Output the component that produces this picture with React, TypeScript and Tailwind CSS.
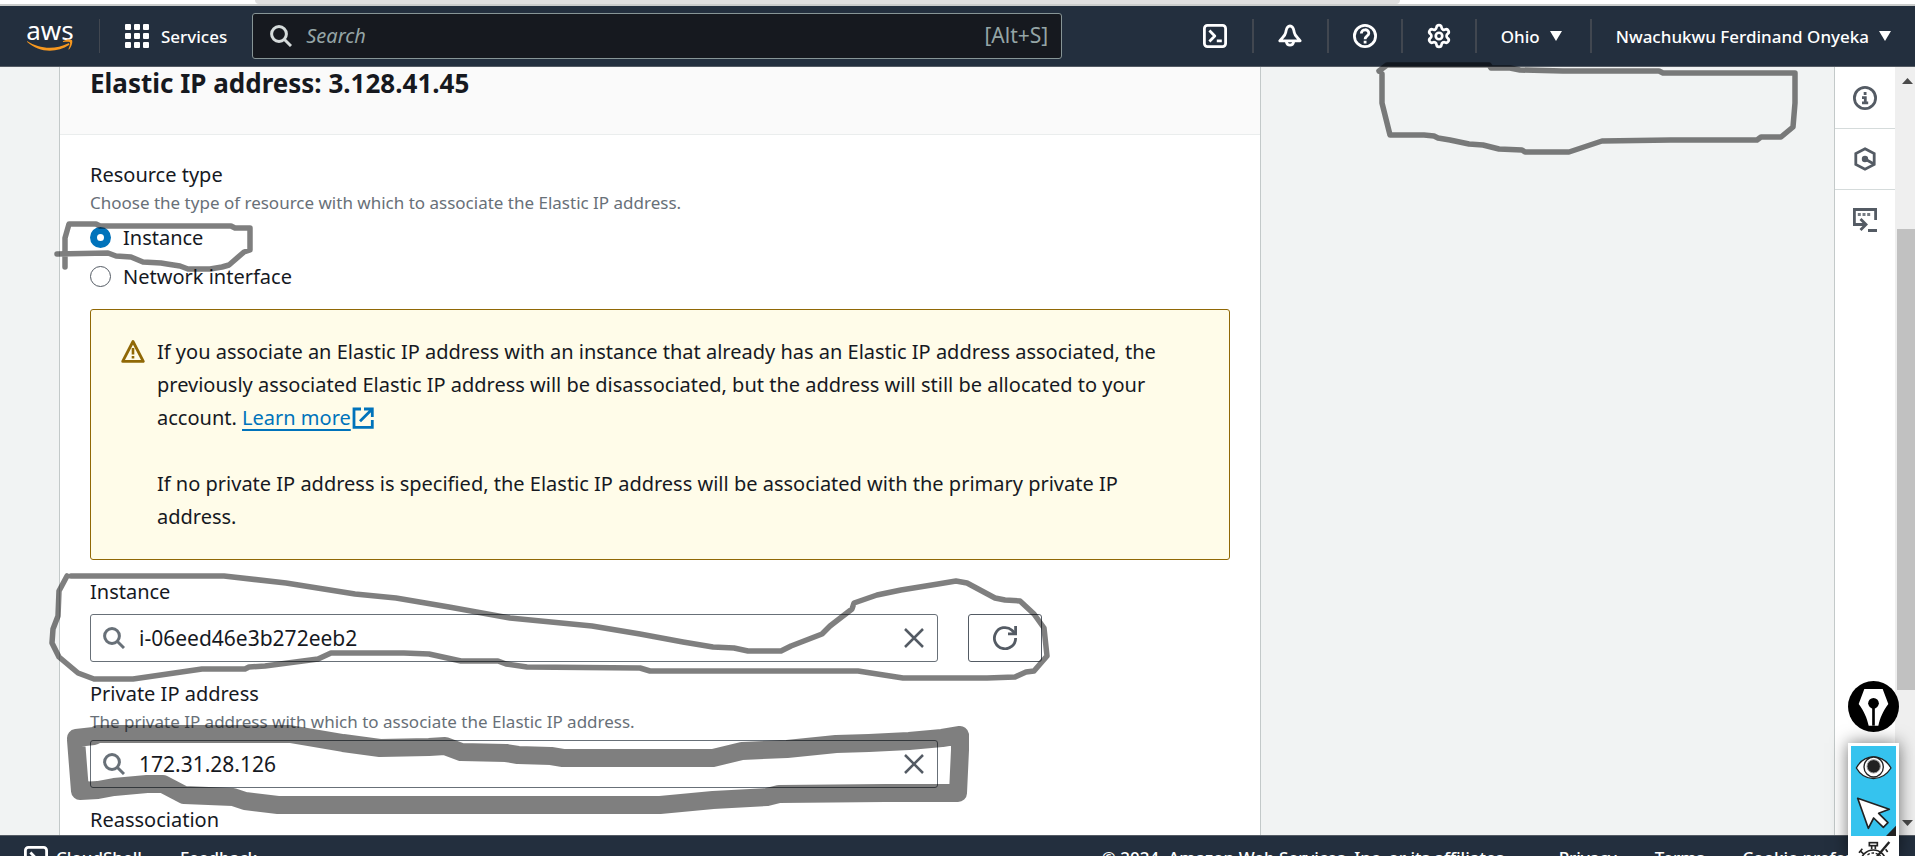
import React from "react";
import { Settings } from "lucide-react";

type IconProps = { className?: string };

const line = {
  fill: "none",
  stroke: "currentColor",
  strokeWidth: 2.8,
  strokeLinejoin: "round" as const,
};

function SearchIcon({ className }: IconProps) {
  return (
    <svg viewBox="0 0 22 22" className={className} {...line} strokeWidth={3} aria-hidden="true">
      <circle cx="9" cy="9" r="7.4" />
      <path d="M14.2 14.2 21 21" />
    </svg>
  );
}

function ShellIcon({ className }: IconProps) {
  return (
    <svg viewBox="0 0 24 24" className={className} {...line} aria-hidden="true">
      <rect x="1.4" y="1.4" width="21.2" height="21.2" rx="3" />
      <path d="m6.4 6.6 5.4 5.4-5.4 5.4M13.8 16.8h5" />
    </svg>
  );
}

function BellIcon() {
  return (
    <svg viewBox="0 0 24 24" className="size-6" {...line} aria-hidden="true">
      <path d="M12 2C8.600 2 8.400 5 7.800 8.200 7.200 12 4.500 13.500 1.800 16.800H22.200C19.500 13.500 16.800 12 16.200 8.200 15.600 5 15.400 2 12 2Z" />
      <path d="M8.300 17.500a3.800 4.800 0 0 0 7.400 0" />
    </svg>
  );
}

function HelpIcon() {
  return (
    <svg viewBox="0 0 24 24" className="size-6" {...line} aria-hidden="true">
      <circle cx="12" cy="12" r="10.600" />
      <path d="M8.300 9.400C8.300 4.600 15.800 4.600 15.800 9.200 15.800 12 12.100 11.800 12.100 15.300M12.100 16.800v2.600" />
    </svg>
  );
}

function InfoIcon() {
  return (
    <svg viewBox="0 0 24 24" className="size-6" {...line} aria-hidden="true">
      <circle cx="12" cy="12" r="10.600" />
      <path d="M12.100 6v3M9 11.600h3.300v5.200M9 16.800h6.200" strokeLinejoin="miter" />
    </svg>
  );
}

function HexIcon() {
  return (
    <svg viewBox="0 0 24 24" className="size-6" {...line} aria-hidden="true">
      <path d="M12 1.800 21.200 6.600V17.400L12 22.200 2.800 17.400V6.600Z" strokeLinejoin="miter" />
      <circle cx="12" cy="12" r="1.800" fill="currentColor" />
      <path d="m12 12 8.500 4.800" />
    </svg>
  );
}

function ConnectIcon() {
  return (
    <svg viewBox="0 0 24 24" className="size-6" {...line} strokeLinejoin="miter" aria-hidden="true">
      <path d="M22.600 12V1.500H1.400V16.500H13M7.500 11 13 16.500l-5.500 5.500M15 22.500h9" />
      <path d="M4.800 6.500h3M9.500 6.500h3M14.200 6.500h3" strokeOpacity=".8" />
    </svg>
  );
}

function WarningIcon() {
  return (
    <svg viewBox="0 0 24 24" className="mt-1 size-6 shrink-0 text-[#906806]" {...line} aria-hidden="true">
      <path d="M12 2.500 22.300 22.400H1.700Z" />
      <path d="M12 9v6.500M12 17v2.600" strokeWidth="2.600" />
    </svg>
  );
}

function ExternalIcon() {
  return (
    <svg viewBox="0 0 22 22" className="ml-px inline size-[22px] align-[-4px]" {...line} strokeLinejoin="miter" aria-hidden="true">
      <path d="M9 2H2V20.300H20.300V13M12 2H20.300V10M20 2.300 8 14.300" />
    </svg>
  );
}

function CloseIcon() {
  return (
    <svg viewBox="0 0 20 20" className="size-5" {...line} strokeWidth={2.500} aria-hidden="true">
      <path d="m1 1 18 18M19 1 1 19" />
    </svg>
  );
}

function RefreshIcon() {
  return (
    <svg viewBox="0 0 24 24" className="size-6" {...line} strokeLinejoin="miter" aria-hidden="true">
      <path d="M22.600 12A10.600 10.600 0 1 1 19 4.200L22 7.500" />
      <path d="M22.600 0V7.800H15" />
    </svg>
  );
}

function Caret() {
  return (
    <svg viewBox="0 0 12 10" className="h-2.5 w-3" aria-hidden="true">
      <path d="M0 0h12L6 10Z" fill="currentColor" />
    </svg>
  );
}

function NavBar() {
  const cell = "flex h-[34px] items-center justify-center border-l-2 border-[#414750]";
  return (
    <header className="flex h-[61px] shrink-0 items-center border-b border-[#545b64] bg-[#232f3e] text-[17px] font-medium text-white">
      <a href="#home" className="ml-[26px] flex w-[48px] flex-col items-center" aria-label="AWS home">
        <span className="text-[26px] leading-[18px] font-normal">aws</span>
        <svg viewBox="0 0 46 12" className="h-3 w-[46px]" aria-hidden="true">
          <path d="M0 2C12 10 28 11 41 4.500 42 4 43 5 42 6 30 14 12 14 .200 3Z" fill="#f7981f" />
          <path d="M36 2.200C39 .200 43 .200 45 1 46 3 44.500 8 42 10.500 41.300 10.800 41.300 10.300 41.600 9.800 42.500 7.500 43.600 4.500 43 3.400 42.200 2.600 39 2.600 36.800 2.900 36 3 35.600 2.600 36 2.200Z" fill="#f7981f" />
        </svg>
      </a>
      <div className="ml-[25px] h-[34px] w-px bg-[#414750]" />
      <button type="button" className="ml-[25px] flex items-center gap-3">
        <svg viewBox="0 0 24 24" className="size-6" fill="currentColor" aria-hidden="true">
          {[0, 9, 18].map((y) => [0, 9, 18].map((x) => <rect key={`${x}-${y}`} x={x} y={y} width="6" height="6" rx="1" />))}
        </svg>
        Services
      </button>
      <label className="ml-[25px] flex h-[46px] max-w-[810px] flex-1 items-center rounded-[3px] border border-[#879596] bg-[#16191f] pr-[13px] pl-[17px] text-xl font-normal text-[#95a5a6]">
        <SearchIcon className="size-[22px] shrink-0 text-[#d5dbdb]" />
        <input type="search" aria-label="Search" placeholder="Search" className="ml-3.5 min-w-0 flex-1 bg-transparent italic outline-none placeholder:text-[#95a5a6]" />
        <span className="text-[21px]">[Alt+S]</span>
      </label>
      <nav className="ml-auto flex items-center">
        <button type="button" aria-label="CloudShell" className="flex w-[74px] justify-center">
          <ShellIcon className="size-6" />
        </button>
        <button type="button" aria-label="Notifications" className={`${cell} w-[75px]`}>
          <BellIcon />
        </button>
        <button type="button" aria-label="Help" className={`${cell} w-[74px]`}>
          <HelpIcon />
        </button>
        <button type="button" aria-label="Settings" className={`${cell} w-[74px]`}>
          <Settings className="size-[26px]" strokeWidth={2.500} />
        </button>
        <button type="button" className={`${cell} gap-2.5 pr-7 pl-6`}>
          Ohio <Caret />
        </button>
        <button type="button" className={`${cell} gap-2.5 px-6`}>
          Nwachukwu Ferdinand Onyeka <Caret />
        </button>
      </nav>
    </header>
  );
}

function Radio({ id, label, checked }: { id: string; label: string; checked?: boolean }) {
  return (
    <div className="mt-1.5 flex items-center gap-3">
      <input
        type="radio"
        id={id}
        name="resource"
        defaultChecked={checked}
        className="size-[21px] appearance-none rounded-full border border-[#545b64] bg-white checked:border-[7px] checked:border-[#0073bb]"
      />
      <label htmlFor={id}>{label}</label>
    </div>
  );
}

function ComboField({ id, value }: { id: string; value: string }) {
  return (
    <div className="flex h-12 max-w-[848px] flex-1 items-center rounded-[3px] border border-[#687078] bg-white px-3 text-[#545b64]">
      <SearchIcon className="size-[22px] shrink-0 text-[#687078]" />
      <input id={id} type="text" defaultValue={value} className="ml-3.5 min-w-0 flex-1 bg-transparent text-[21px] text-[#16191f] outline-none" />
      <button type="button" aria-label="Clear" className="mr-px">
        <CloseIcon />
      </button>
    </div>
  );
}

function AssociateCard() {
  const hint = "text-[17px] leading-6 text-[#687078]";
  return (
    <section className="w-full max-w-[1202px] border-x border-[#c3c9c9] bg-white">
      <h2 className="border-b border-[#eaeded] bg-[#fafafa] px-[30px] pb-[34px] text-[26px] leading-[33px] font-bold">
        Elastic IP address: 3.128.41.45
      </h2>
      <form className="px-[30px] pt-[23px]">
        <fieldset>
          <legend>Resource type</legend>
          <p className={hint}>Choose the type of resource with which to associate the Elastic IP address.</p>
          <Radio id="type-instance" label="Instance" checked />
          <Radio id="type-network" label="Network interface" />
        </fieldset>
        <div className="mt-4 flex gap-3 rounded-[3px] border border-[#906806] bg-[#fffce9] pt-[25px] pr-10 pb-[26px] pl-[30px]">
          <WarningIcon />
          <div>
            <p>
              If you associate an Elastic IP address with an instance that already has an Elastic IP address associated, the previously
              associated Elastic IP address will be disassociated, but the address will still be allocated to your account.{" "}
              <a href="#learn-more" className="whitespace-nowrap text-[#0073bb]">
                <span className="underline decoration-2 underline-offset-4">Learn more</span>
                <ExternalIcon />
              </a>
            </p>
            <p className="mt-[33px]">
              If no private IP address is specified, the Elastic IP address will be associated with the primary private IP address.
            </p>
          </div>
        </div>
        <label htmlFor="instance" className="mt-[15px] block">
          Instance
        </label>
        <div className="mt-1.5 flex gap-[30px]">
          <ComboField id="instance" value="i-06eed46e3b272eeb2" />
          <button type="button" aria-label="Refresh" className="flex w-[74px] items-center justify-center rounded-[3px] border border-[#545b64] text-[#545b64]">
            <RefreshIcon />
          </button>
        </div>
        <label htmlFor="private-ip" className="mt-[15px] block">
          Private IP address
        </label>
        <p className={hint}>The private IP address with which to associate the Elastic IP address.</p>
        <div className="mt-1.5 flex">
          <ComboField id="private-ip" value="172.31.28.126" />
        </div>
        <h3 className="mt-[15px]">Reassociation</h3>
      </form>
    </section>
  );
}

function SideRail() {
  return (
    <aside className="flex w-[61px] shrink-0 flex-col border-l border-[#c3c9c9] bg-white text-[#545b64]">
      <button type="button" aria-label="Info" className="flex h-[62px] items-center justify-center border-b border-[#d5dbdb]">
        <InfoIcon />
      </button>
      <button type="button" aria-label="Diagnostics" className="flex h-[61px] items-center justify-center border-b border-[#d5dbdb]">
        <HexIcon />
      </button>
      <button type="button" aria-label="Connect" className="flex h-[60px] items-center justify-center">
        <ConnectIcon />
      </button>
    </aside>
  );
}

function ScrollTrack() {
  return (
    <div className="flex w-5 shrink-0 flex-col items-end bg-[#efefef]" aria-hidden="true">
      <svg viewBox="0 0 18 26" className="h-[26px] w-[18px]">
        <path d="M5 17h11l-5.500-6Z" fill="#4b4b4b" />
      </svg>
      <div className="mt-[136px] h-[461px] w-[18px] bg-[#c1c1c1]" />
      <svg viewBox="0 0 18 26" className="mt-auto h-[26px] w-[18px]">
        <path d="M5 11h11l-5.500 6Z" fill="#4b4b4b" />
      </svg>
    </div>
  );
}

function Footer() {
  return (
    <footer className="flex h-[21px] shrink-0 items-start gap-[38px] overflow-hidden border-t border-[#545b64] bg-[#232f3e] pt-2.5 pr-4 pl-6 text-[17px] leading-6 font-medium text-white">
      <button type="button" className="flex shrink-0 items-center gap-2">
        <ShellIcon className="size-6" /> CloudShell
      </button>
      <a href="#feedback">Feedback</a>
      <span className="ml-auto whitespace-nowrap">© 2024, Amazon Web Services, Inc. or its affiliates.</span>
      <a href="#privacy" className="ml-3">Privacy</a>
      <a href="#terms">Terms</a>
      <a href="#cookies" className="whitespace-nowrap">Cookie preferences</a>
    </footer>
  );
}

function PenToolbar() {
  return (
    <div className="absolute right-4 bottom-0 flex w-[51px] flex-col gap-[11px]">
      <button type="button" aria-label="Pen">
        <svg viewBox="0 0 153 153" className="block size-[51px]" aria-hidden="true">
          <circle cx="76.500" cy="76.500" r="76.500" />
          <path d="M49 24H104L121 69C104 92 96 112 91 134H62C57 112 49 92 32 69Z" fill="#fff" />
          <circle cx="76.500" cy="67" r="16" />
          <path d="M76.500 67V134" stroke="#000" strokeWidth="8" />
        </svg>
      </button>
      <div className="flex h-[113px] flex-col overflow-hidden border-[3px] border-b-0 border-white bg-white shadow-[0_0_16px_rgba(0,0,0,0.55)]">
        <button type="button" aria-label="Show" className="bg-[#35c3ee]">
          <svg viewBox="0 0 135 135" className="block size-[45px]" stroke="#222" aria-hidden="true">
            <path d="M16 66C40 22 94 22 120 66 94 108 40 108 16 66Z" fill="#fff" strokeWidth="4" />
            <ellipse cx="68" cy="63" rx="29" ry="30" fill="#fff" strokeWidth="4" />
            <circle cx="68" cy="61" r="20" fill="#222" stroke="#999" strokeWidth="3" />
          </svg>
        </button>
        <button type="button" aria-label="Select" className="bg-[#35c3ee]">
          <svg viewBox="0 0 135 135" className="block size-[45px]" aria-hidden="true">
            <path d="m20 22 95 33-32 12 28 28-14 14-29-28-16 31Z" fill="#fff" stroke="#222" strokeWidth="5" strokeLinejoin="round" />
            <path d="M135 104V135H105Z" fill="#222" />
          </svg>
        </button>
        <button type="button" aria-label="Timer">
          <svg viewBox="0 0 135 135" className="block size-[45px]" fill="none" stroke="#222" strokeWidth="5" aria-hidden="true">
            <rect x="55" y="20" width="24" height="9" />
            <path d="M62 29V40M73 29V40M27 44 38 54M24 50 34 38M104 40 110 48" />
            <circle cx="67" cy="80" r="38" />
            <circle cx="67" cy="80" r="29" strokeDasharray="8 5" strokeWidth="4" />
            <path d="M115 18 66 76" strokeWidth="7" />
          </svg>
        </button>
      </div>
    </div>
  );
}

/* Freehand marker strokes laid over the page. */
function MarkerStrokes() {
  return (
    <svg
      viewBox="0 0 1915 856"
      className="pointer-events-none absolute top-0 left-0 h-[856px] w-[1915px]"
      fill="none"
      stroke="#000"
      strokeOpacity=".5"
      strokeWidth="5.500"
      strokeLinejoin="round"
      strokeLinecap="round"
      aria-hidden="true"
    >
      <path d="M65 267V238L69 224H96L100 226H231L235 228H250V250L244 252 229 265 222 267 210 269H188L180 266 167 264 161 263 143 262 131 257 116 256 108 253 57 254" />
      <path d="M1379 71 1387 65H1489L1491 68H1510L1520 70 1563 71H1659L1663 73H1795V103L1793 127 1781 137H1761L1757 140H1671L1602 141 1569 152H1525L1522 150 1499 149 1483 145 1469 144 1450 140 1438 138 1434 136 1424 135H1390L1385 115 1382 103V74" />
      <path d="M71 576H224L286 583 355 594 396 598 449 607 510 618 592 626 640 634 683 642 713 647 734 648 748 651H781L791 646 822 634 830 626 852 609 854 603 877 595 901 590 938 584 956 581 967 583 995 598 1005 600 1020 601 1034 614 1044 628 1047 656 1034 671 1026 672 1015 677 987 678H903L858 671H650L640 668 527 667 506 664 498 661H461L429 654 404 653H331L318 659 265 666 249 667 245 669H202L133 679H94L78 673 59 657 52 643 53 629 58 616 59 591 67 576" />
      <path
        strokeWidth="18"
        d="M76 738 94 736 98 734H290L343 743 380 748 429 747 445 746 461 752 506 753 518 755 551 756 563 758H713L742 751 787 749 836 744 869 743 909 741 942 738 960 735V750L958 793H885L779 794 767 797 713 800 660 805H278L245 801 233 797 184 795 163 784H147L114 787 98 790 80 791 76 740"
      />
    </svg>
  );
}

export default function App() {
  return (
    <div className="relative flex h-screen flex-col overflow-hidden bg-[#f1f3f3] font-['Noto_Sans',sans-serif] text-xl leading-[33px] text-[#16191f]">
      <div className="h-1.5 shrink-0 border-b-2 border-[#cacccb] bg-white pr-[515px] pl-[255px]">
        <div className="h-1 rounded-b-[8px] bg-[#dfdfdf]" />
      </div>
      <NavBar />
      <div className="flex min-h-0 flex-1">
        <main className="min-w-0 flex-1 overflow-hidden pl-[59px]">
          <AssociateCard />
        </main>
        <SideRail />
        <ScrollTrack />
      </div>
      <Footer />
      <MarkerStrokes />
      <PenToolbar />
    </div>
  );
}
